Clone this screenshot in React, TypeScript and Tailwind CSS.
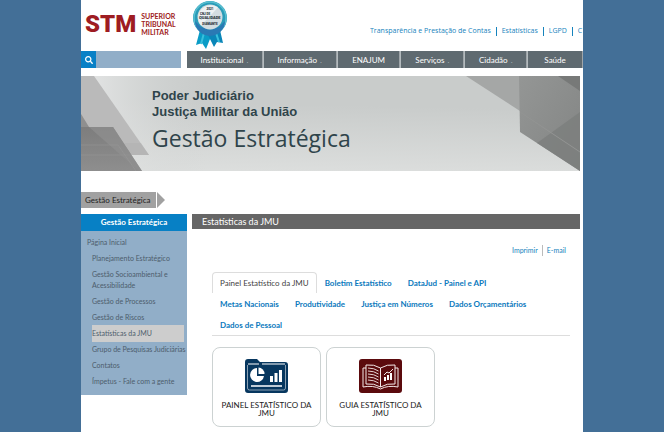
import * as React from "react"
import { clsx } from "clsx"
import { FaSearch } from "react-icons/fa"

const TOP_LINKS = ["Transparência e Prestação de Contas", "Estatísticas", "LGPD", "C"]

const MENU = [
  { label: "Institucional", width: "grow-[75]", more: true },
  { label: "Informação", width: "grow-[72]", more: true },
  { label: "ENAJUM", width: "grow-[62]", more: false },
  { label: "Serviços", width: "grow-[62]", more: true },
  { label: "Cidadão", width: "grow-[61]", more: true },
  { label: "Saúde", width: "grow-[54]", more: false },
]

const SIDE_LINKS = [
  "Planejamento Estratégico",
  "Gestão Socioambiental e\nAcessibilidade",
  "Gestão de Processos",
  "Gestão de Riscos",
  "Estatísticas da JMU",
  "Grupo de Pesquisas Judiciárias",
  "Contatos",
  "Ímpetus - Fale com a gente",
]

const TABS = [
  "Painel Estatístico da JMU",
  "Boletim Estatístico",
  "DataJud - Painel e API",
  "Metas Nacionais",
  "Produtividade",
  "Justiça em Números",
  "Dados Orçamentários",
  "Dados de Pessoal",
]

function Seal() {
  return (
    <svg viewBox="0 0 36 50" className="h-[50px] w-9" aria-label="Prêmio CNJ de Qualidade">
      <path d="M8 30 4 45l6-2 4 6 6-15z" fill="#0a9cc6" />
      <path d="M28 30l3 13-6-1-3 5-7-14z" fill="#0a86b8" />
      <path d="M12 33 9 44M24 33l3 9" stroke="#39bfdc" strokeWidth="2" />
      <circle cx="18" cy="18" r="17" fill="#2a9cb8" />
      <circle cx="18" cy="18" r="16" fill="none" stroke="#58bfd0" strokeWidth="1.500" />
      <path d="M3 21a15 15 0 0 0 30 0l-6 6-9 3-9-3z" fill="#2a79b4" />
      <circle cx="18" cy="17" r="12.500" fill="#d3dde1" />
      <path d="M9 25.500a12.500 12.500 0 0 1 17-18z" fill="#edf1f2" />
      <g fill="#263238" fontFamily="Roboto, sans-serif" fontWeight="900">
        <text x="18" y="10" fontSize="3" textAnchor="middle">2021</text>
        <text x="8" y="15" fontSize="3">CNJ DE</text>
        <text x="7" y="19" fontSize="4">QUALIDADE</text>
        <text x="18" y="25" fontSize="3" textAnchor="middle">DIAMANTE</text>
      </g>
    </svg>
  )
}

function BannerArt() {
  return (
    <svg viewBox="0 0 499 95" preserveAspectRatio="none" className="absolute inset-0 h-full w-full" aria-hidden="true">
      <defs>
        <linearGradient id="sky" x1="0.45" y1="0" x2="0.35" y2="1">
          <stop offset="0.3" stopColor="#c9cccb" />
          <stop offset="1" stopColor="#dcdedd" />
        </linearGradient>
        <linearGradient id="glow" x1="0" x2="1">
          <stop offset="0" stopColor="#e6e7e7" />
          <stop offset="0.25" stopColor="#d2d5d4" stopOpacity="0" />
        </linearGradient>
        <linearGradient id="steel" x1="0" y1="0" x2="1" y2="1">
          <stop offset="0" stopColor="#949695" />
          <stop offset="1" stopColor="#828483" />
        </linearGradient>
        <linearGradient id="slate" x1="0" y1="0" x2="0" y2="1">
          <stop offset="0" stopColor="#7d7d7d" />
          <stop offset="1" stopColor="#8e8e8e" />
        </linearGradient>
      </defs>
      <rect width="499" height="95" fill="url(#sky)" />
      <rect width="499" height="95" fill="url(#glow)" />
      <path d="M0 0h13l55 79H0z" fill="#bababa" />
      <path d="M0 38 25 79h43l-8-12H0z" fill="#b0b0b0" opacity="0.400" />
      <path d="M0 51h32l29 44H0z" fill="url(#slate)" />
      <path d="M0 38 8 51H0z" fill="#8f8f8f" />
      <path d="M8 51h24l29 44h-3z" fill="#909090" opacity="0.700" />
      <path d="M0 69h37l18 26M0 79h50" fill="none" stroke="#999" opacity="0.500" />
      <path d="M385 0h54v35z" fill="#a5a7a6" />
      <path d="M438 0h61v95l-60-39z" fill="url(#steel)" />
      <path d="M477 0h22v15z" fill="#777978" />
      <path d="M499 36v59l-43-28z" fill="#7c7e7d" opacity="0.800" />
      <path d="M439 36 499 76" stroke="#929493" />
    </svg>
  )
}

function PanelIcon() {
  return (
    <svg viewBox="0 0 43 34" className="h-[34px] w-[43px]" aria-hidden="true">
      <path d="M3 0h9l3 3h25a3 3 0 0 1 3 3v25a3 3 0 0 1-3 3H3a3 3 0 0 1-3-3V3a3 3 0 0 1 3-3z" fill="#07375f" />
      <path d="M3 5h11M17 5h23" stroke="#fff" />
      <path d="M2.500 6v23q0 2 2 2h34q2 0 2-2V6" fill="none" stroke="#c3cfd9" strokeWidth="0.700" />
      <path d="M12 9a7 7 0 1 0 7 8h-7z" fill="#fff" />
      <path d="M13.500 8.500a6.500 6.500 0 0 1 6 6.500h-6z" fill="#fff" />
      <path d="M25 17h3v6h-3zM29.500 14h3v9h-3zM34 11h3v12h-3z" fill="#fff" />
      <path d="M6 27h31" stroke="#fff" strokeWidth="1.500" />
    </svg>
  )
}

function GuideIcon() {
  return (
    <svg viewBox="0 0 43 34" className="h-[34px] w-[43px]" aria-hidden="true">
      <rect width="43" height="34" rx="3" fill="#5b0a0d" />
      <g fill="none" stroke="#f4e9e9">
        <path d="M21.500 9Q15 5 7 6v19q8-1 14.500 3Q28 24 36 25V6q-8-1-14.500 3v19" />
        <path d="M7 9H4v19q10-2 17.500 2Q29 26 39 28V9h-3" />
        <path d="M9 9q6 0 10.500 3M9 12q6 0 10.500 3M9 15q6 0 10.500 3M9 18q6 0 10.500 3M9 21q6 0 10.500 3" strokeWidth="0.900" />
        <path d="M25 16l3-3 2 1 4-4" />
      </g>
      <path d="M25 18h2v4h-2zM28 16h2v5h-2zM31 14h2v7h-2z" fill="#fff" />
    </svg>
  )
}

const CARDS = [
  { label: "PAINEL ESTATÍSTICO DA JMU", icon: PanelIcon },
  { label: "GUIA ESTATÍSTICO DA JMU", icon: GuideIcon },
]

function Header() {
  return (
    <header>
      <div className="flex h-[51px] items-start overflow-hidden">
        <a href="#" className="ml-1 mt-3 flex shrink-0 items-center gap-[5px] text-[#9e1c22]">
          <span className="font-['Roboto',sans-serif] text-[24px] font-black leading-6">STM</span>
          <span className="text-[7px] font-bold leading-2">
            SUPERIOR<br />TRIBUNAL<br />MILITAR
          </span>
        </a>
        <div className="ml-4 shrink-0">
          <Seal />
        </div>
        <nav className="ml-auto mt-[25px] w-[213px] shrink-0 overflow-hidden">
          <ul className="flex w-max font-['Open_Sans',sans-serif] text-[7px] leading-3 text-[#1683bd]">
            {TOP_LINKS.map((link, i) => (
              <li key={link} className="flex items-center">
                {i > 0 && <span className="mx-[5px] h-[9px] w-px bg-[#1683bd]" />}
                <a href="#">{link}</a>
              </li>
            ))}
          </ul>
        </nav>
      </div>
      <div className="flex h-[17px] gap-1.5">
        <form className="flex w-[100px] shrink-0" onSubmit={(e) => e.preventDefault()}>
          <button type="submit" aria-label="Buscar" className="flex w-[15px] items-center justify-center bg-[#0880c6] text-white">
            <FaSearch className="h-2 w-2" />
          </button>
          <input type="text" aria-label="Termo de busca" className="min-w-0 flex-1 bg-[#91aec8] px-1 text-[8px] outline-none" />
        </form>
        <nav className="flex flex-1 gap-px bg-[#b3babd]">
          {MENU.map((item) => (
            <a
              key={item.label}
              href="#"
              className={clsx("flex basis-0 items-center justify-center border-r border-white/40 bg-[#5f6a70] text-[8px] leading-3 text-white", item.width)}
            >
              {item.label}
              {item.more && <span className="ml-[3px] text-[#a8b0b4]">.</span>}
            </a>
          ))}
        </nav>
      </div>
    </header>
  )
}

function Sidebar() {
  return (
    <aside className="w-[106px] shrink-0 self-start bg-[#91aec8] pb-1.5 text-[7px] leading-[11px] text-[#4d5d6c]">
      <h2 className="bg-[#0780c5] text-center text-[8px] font-bold leading-[17px] text-white">Gestão Estratégica</h2>
      <a href="#" className="mt-[3px] block px-1.5 leading-4">Página Inicial</a>
      <ul className="pl-[11px] pr-[3px]">
        {SIDE_LINKS.map((link) => (
          <li key={link} className={clsx("-mb-px whitespace-pre py-[3px]", link === "Estatísticas da JMU" && "bg-[#cdcdcd]")}>
            <a href="#" className="block">{link}</a>
          </li>
        ))}
      </ul>
    </aside>
  )
}

export default function App() {
  const [tab, setTab] = React.useState(TABS[0])

  return (
    <div className="min-h-screen bg-[#436f97] font-['Lato','Noto_Sans',sans-serif]">
      <div className="mx-auto min-h-screen w-full max-w-[502px] bg-white">
        <Header />

        {/* Banner */}
        <div className="relative mr-[3px] mt-2 h-[95px] pl-[71px] pt-3 text-[#2f444b]">
          <BannerArt />
          <div className="relative">
            <p className="font-['Liberation_Sans',sans-serif] text-[13px] font-bold leading-4">
              Poder Judiciário<br />Justiça Militar da União
            </p>
            <h1 className="font-['Open_Sans','Noto_Sans',sans-serif] text-[23px] leading-9">Gestão Estratégica</h1>
          </div>
        </div>

        {/* Breadcrumb */}
        <div className="mt-[21px] flex h-4 items-center gap-px text-[8px] text-[#222]">
          <a href="#" className="w-[75px] bg-[#a1a1a1] pl-1 leading-4">Gestão Estratégica</a>
          <svg viewBox="0 0 8 16" className="h-4 w-2" aria-hidden="true">
            <path d="M0 0l8 8-8 8z" fill="#a1a1a1" />
          </svg>
        </div>

        <div className="mr-[3px] mt-1.5 flex gap-[5px]">
          <Sidebar />
          <main className="min-w-0 flex-1">
            <h2 className="bg-[#666] pl-2.5 text-[9px] leading-[15px] text-white">Estatísticas da JMU</h2>
            <div className="mr-3.5 mt-4 flex justify-end text-[7px] leading-[11px] text-[#1683bd]">
              <a href="#" className="border-r border-[#bbb] pr-1">Imprimir</a>
              <a href="#" className="pl-1">E-mail</a>
            </div>

            <div role="tablist" className="ml-5 mr-2.5 mt-4 flex flex-wrap border-b border-[#ddd] pr-4">
              {TABS.map((name) => (
                <button
                  key={name}
                  role="tab"
                  aria-selected={tab === name}
                  onClick={() => setTab(name)}
                  className={clsx(
                    "h-[21px] rounded-t-sm border border-b-0 px-[7px] text-[8px]",
                    tab === name ? "border-[#ddd] text-[#444]" : "border-transparent font-bold text-[#0b79bd]"
                  )}
                >
                  {name}
                </button>
              ))}
            </div>

            <div className="ml-5 mt-[11px] flex gap-[5px] pb-1.5">
              {CARDS.map(({ label, icon: Icon }) => (
                <a
                  key={label}
                  href="#"
                  className="flex h-20 w-[109px] flex-col items-center rounded-lg border border-[#ccd2d2] px-2 pt-[11px] text-center text-[8px] leading-2 text-[#222]"
                >
                  <Icon />
                  <span className="mt-2">{label}</span>
                </a>
              ))}
            </div>
          </main>
        </div>
      </div>
    </div>
  )
}
